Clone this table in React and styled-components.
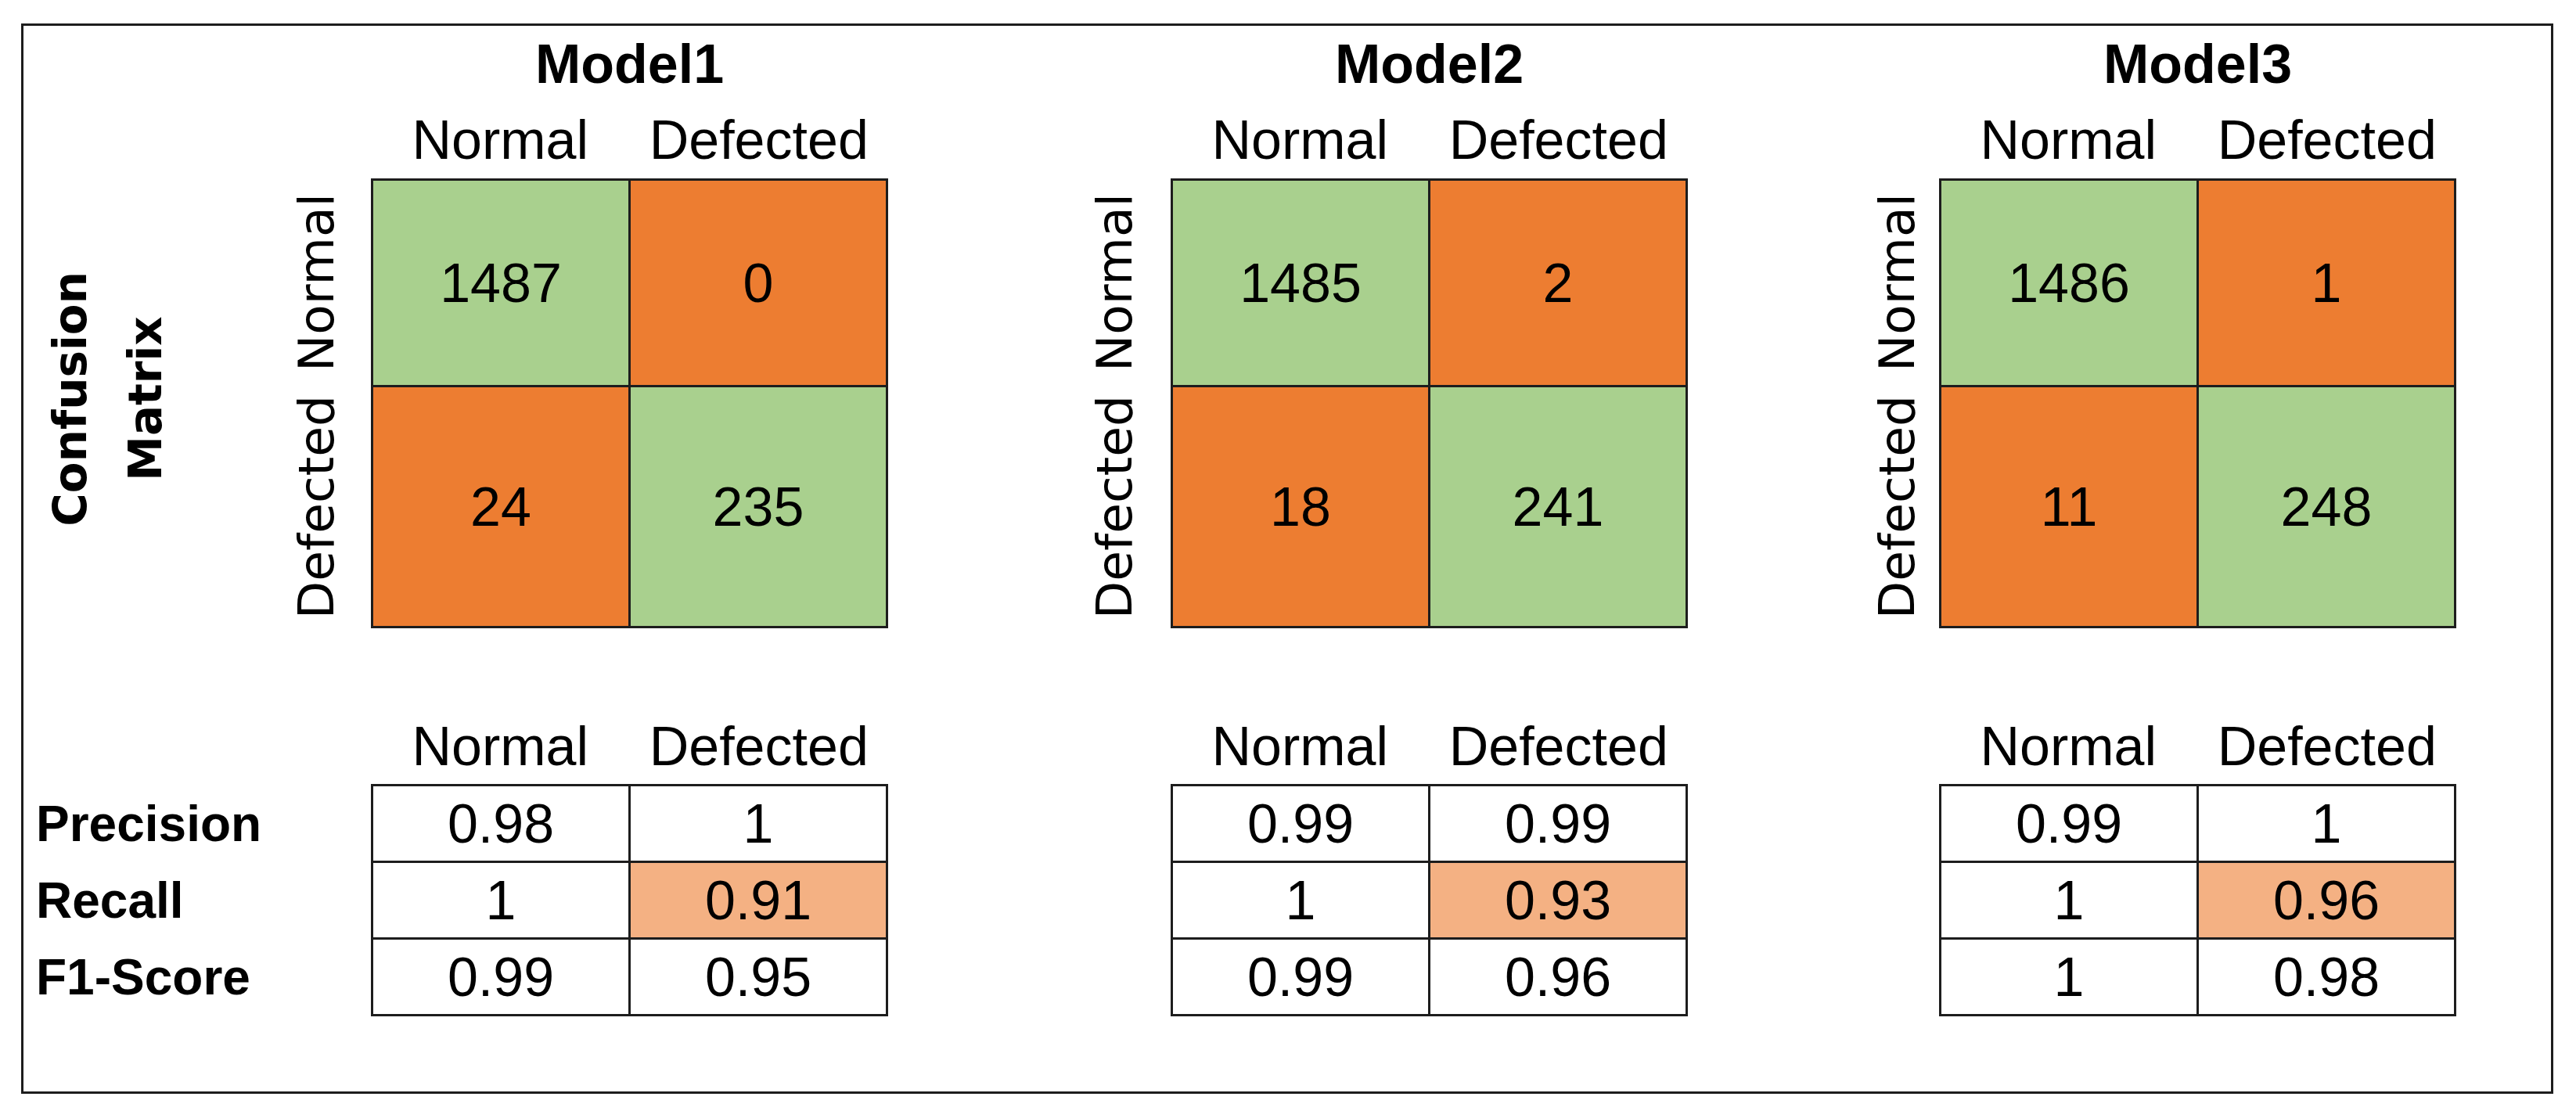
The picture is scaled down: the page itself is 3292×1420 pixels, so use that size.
import React from "react";
import styled, { createGlobalStyle } from "styled-components";

const GlobalStyle = createGlobalStyle`
  html, body {
    margin: 0;
    padding: 0;
    background: #ffffff;
  }
  body {
    font-family: "Liberation Sans", Arial, sans-serif;
    color: #000;
  }
`;

const ROWS = "97px 98px 575px 103px 96px 297px 96px";
const LINE = "#1d1d1d";
const GREEN = "#a9d08e";
const ORANGE = "#ed7d31";
const PEACH = "#f4b183";

const Page = styled.div`
  padding: 30px 0 0 27px;
`;

const Frame = styled.div`
  box-sizing: border-box;
  width: 3236px;
  height: 1368px;
  border: 3px solid ${LINE};
  display: flex;
  align-items: stretch;
`;

const LeftColumn = styled.div`
  width: 343px;
  display: grid;
  grid-template-rows: ${ROWS};
`;

const ConfusionLabel = styled.div`
  grid-row: 3;
  align-self: center;
  justify-self: start;
  margin-left: 12px;
  margin-bottom: 11px;
  writing-mode: vertical-rl;
  transform: rotate(180deg);
  font-family: "DejaVu Sans", Verdana, sans-serif;
  font-weight: 700;
  font-size: 58px;
  line-height: 96px;
  text-align: center;
  white-space: nowrap;
`;

const MetricLabels = styled.div`
  grid-row: 6;
  display: grid;
  grid-template-rows: repeat(3, 95px);
  row-gap: 3px;
  padding: 3px 0;
`;

const MetricLabel = styled.div`
  align-self: center;
  padding-left: 16px;
  font-weight: 700;
  font-size: 64px;
  line-height: 64px;
  white-space: nowrap;
`;

const ModelBlock = styled.div`
  margin-left: ${(p) => p.$ml}px;
  display: grid;
  grid-template-rows: ${ROWS};
  grid-template-columns: 63px ${(p) => p.$gap}px 661px;
`;

const Title = styled.div`
  grid-column: 3;
  grid-row: 1;
  align-self: center;
  text-align: center;
  font-weight: 700;
  font-size: 70px;
  line-height: 70px;
`;

const Header = styled.div`
  grid-column: 3;
  grid-row: ${(p) => p.$row};
  align-self: center;
  display: grid;
  grid-template-columns: 1fr 1fr;
  font-size: 70px;
  line-height: 70px;
  text-align: center;
`;

const VLabels = styled.div`
  grid-column: 1;
  grid-row: 3;
  display: grid;
  grid-template-rows: 265px 310px;
  justify-items: center;
`;

const VLabel = styled.div`
  align-self: center;
  writing-mode: vertical-rl;
  transform: rotate(180deg);
  font-family: "DejaVu Sans", Verdana, sans-serif;
  font-size: 63px;
  line-height: 63px;
  white-space: nowrap;
`;

const Matrix = styled.div`
  grid-column: 3;
  grid-row: 3;
  display: grid;
  grid-template-columns: 326px 326px;
  grid-template-rows: 261px 305px;
  gap: 3px;
  padding: 3px;
  background: ${LINE};
`;

const MetricTable = styled.div`
  grid-column: 3;
  grid-row: 6;
  display: grid;
  grid-template-columns: 326px 326px;
  grid-template-rows: repeat(3, 95px);
  gap: 3px;
  padding: 3px;
  background: ${LINE};
`;

const Cell = styled.div`
  background: ${(p) => p.$bg || "#ffffff"};
  display: flex;
  align-items: center;
  justify-content: center;
  font-size: 70px;
  line-height: 70px;
`;

const models = [
  {
    name: "Model1",
    ml: 0,
    gap: 38,
    cm: [1487, 0, 24, 235],
    metrics: [
      ["0.98", "1"],
      ["1", "0.91"],
      ["0.99", "0.95"],
    ],
  },
  {
    name: "Model2",
    ml: 258,
    gap: 40,
    cm: [1485, 2, 18, 241],
    metrics: [
      ["0.99", "0.99"],
      ["1", "0.93"],
      ["0.99", "0.96"],
    ],
  },
  {
    name: "Model3",
    ml: 236,
    gap: 22,
    cm: [1486, 1, 11, 248],
    metrics: [
      ["0.99", "1"],
      ["1", "0.96"],
      ["1", "0.98"],
    ],
  },
];

const cmColors = [GREEN, ORANGE, ORANGE, GREEN];

function Model({ m }) {
  return (
    <ModelBlock $ml={m.ml} $gap={m.gap}>
      <Title>{m.name}</Title>
      <Header $row={2}>
        <span>Normal</span>
        <span>Defected</span>
      </Header>
      <VLabels>
        <VLabel>Normal</VLabel>
        <VLabel>Defected</VLabel>
      </VLabels>
      <Matrix>
        {m.cm.map((v, i) => (
          <Cell key={i} $bg={cmColors[i]}>
            {v}
          </Cell>
        ))}
      </Matrix>
      <Header $row={5}>
        <span>Normal</span>
        <span>Defected</span>
      </Header>
      <MetricTable>
        {m.metrics.map((row, r) =>
          row.map((v, c) => (
            <Cell key={`${r}-${c}`} $bg={r === 1 && c === 1 ? PEACH : "#ffffff"}>
              {v}
            </Cell>
          ))
        )}
      </MetricTable>
    </ModelBlock>
  );
}

export default function App() {
  return (
    <>
      <GlobalStyle />
      <Page>
        <Frame>
          <LeftColumn>
            <ConfusionLabel>
              Confusion
              <br />
              Matrix
            </ConfusionLabel>
            <MetricLabels>
              <MetricLabel>Precision</MetricLabel>
              <MetricLabel>Recall</MetricLabel>
              <MetricLabel>F1-Score</MetricLabel>
            </MetricLabels>
          </LeftColumn>
          {models.map((m) => (
            <Model key={m.name} m={m} />
          ))}
        </Frame>
      </Page>
    </>
  );
}
